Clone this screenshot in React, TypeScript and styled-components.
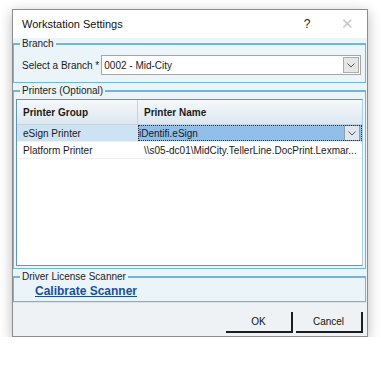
import { createGlobalStyle } from 'styled-components';
import styled from 'styled-components';

const GlobalStyle = createGlobalStyle`
  html, body {
    margin: 0;
    padding: 0;
    background: #ffffff;
  }
  body {
    font-family: 'Liberation Sans', Arial, sans-serif;
    font-size: 10px;
    color: #1a1a1a;
  }
`;

const Page = styled.div`
  padding: 9px 13px 0 12px;
`;

const Window = styled.div`
  width: 354px;
  height: 326px;
  border: 1px solid #8c8c8c;
  background: #ffffff;
  box-shadow: 0 3px 12px rgba(0, 0, 0, 0.28);
  display: flex;
  flex-direction: column;
`;

const TitleBar = styled.div`
  height: 28px;
  display: flex;
  align-items: center;
  padding-left: 9px;
  font-size: 11px;
  color: #111;
`;

const TitleText = styled.span`
  flex: 1;
`;

const TitleButton = styled.span<{ $muted?: boolean }>`
  width: 40px;
  text-align: center;
  font-size: ${({ $muted }) => ($muted ? '15px' : '12px')};
  color: ${({ $muted }) => ($muted ? '#c8c8c8' : '#222')};
`;

const Body = styled.div`
  flex: 1;
  display: flex;
  flex-direction: column;
  background: #ebf4f9;
  padding: 0 1px 0 0;
`;

const Group = styled.fieldset<{ $grow?: boolean }>`
  margin: 0;
  min-width: 0;
  border: 1px solid #6db6dd;
  border-top-width: 2px;
  padding: 0;
  flex: ${({ $grow }) => ($grow ? 1 : 'none')};
  display: flex;
  flex-direction: column;
  & + & {
    margin-top: 2px;
  }
`;

const Legend = styled.legend`
  margin-left: 6px;
  padding: 0 2px;
  font-size: 10px;
  line-height: 12px;
  color: #222;
`;

const BranchRow = styled.div`
  display: flex;
  align-items: center;
  gap: 2px;
  padding: 5px 4px 7px 8px;
`;

const Label = styled.span`
  white-space: nowrap;
`;

const Select = styled.div`
  flex: 1;
  height: 18px;
  border: 1px solid #a6a6a6;
  background: #ffffff;
  display: flex;
  align-items: center;
  padding-left: 2px;
`;

const SelectValue = styled.span`
  flex: 1;
`;

const DropButton = styled.span<{ $dark?: boolean }>`
  width: 14px;
  height: 14px;
  margin-right: 1px;
  border: 1px solid ${({ $dark }) => ($dark ? '#8e9fb0' : '#acacac')};
  background: ${({ $dark }) => ($dark ? '#dfe6ee' : '#e6e6e6')};
  display: flex;
  align-items: center;
  justify-content: center;
`;

const Grid = styled.div`
  flex: 1;
  margin: 2px 2px 2px 2px;
  background: #ffffff;
  border: 1px solid #5f97b5;
  border-right-color: #a9cfe4;
  display: flex;
  flex-direction: column;
`;

const Row = styled.div<{ $header?: boolean }>`
  display: grid;
  grid-template-columns: 121px 1fr;
  height: ${({ $header }) => ($header ? '24px' : '16px')};
  background: ${({ $header }) =>
    $header ? 'linear-gradient(#f5f8fb, #dde7f0)' : 'transparent'};
  border-bottom: 1px solid ${({ $header }) => ($header ? '#c5d3df' : '#f0f0f0')};
  font-weight: ${({ $header }) => ($header ? 700 : 400)};
`;

const Cell = styled.div<{ $tone?: 'row' | 'edit'; $header?: boolean }>`
  display: flex;
  align-items: center;
  padding-left: ${({ $tone }) => ($tone === 'edit' ? '1px' : '6px')};
  min-width: 0;
  white-space: nowrap;
  border-right: 1px solid ${({ $header }) => ($header ? '#c5d3df' : 'transparent')};
  background: ${({ $tone }) =>
    $tone === 'row' ? '#cde2f3' : $tone === 'edit' ? '#92bfe9' : 'transparent'};
  outline: ${({ $tone }) => ($tone === 'edit' ? '1px dotted #333' : 'none')};
  outline-offset: -1px;
`;

const CellText = styled.span`
  flex: 1;
`;

const LinkRow = styled.div`
  padding: 1px 0 2px 21px;
  line-height: 14px;
`;

const Link = styled.a`
  font-size: 12px;
  font-weight: 700;
  color: #1a4f9c;
  text-decoration: underline;
`;

const Footer = styled.div`
  height: 33px;
  background: #eff2f5;
  border-top: 1px solid #d8e3ea;
  display: flex;
  justify-content: flex-end;
  align-items: center;
  gap: 3px;
  padding-right: 4px;
`;

const Button = styled.button`
  width: 67px;
  height: 21px;
  margin-top: 5px;
  font-family: inherit;
  font-size: 10px;
  color: #111;
  background: #eff2f5;
  border: none;
  border-right: 2px solid #1d1d1d;
  border-bottom: 2px solid #1d1d1d;
  padding: 0;
`;

const Chevron = () => (
  <svg width="8" height="5" viewBox="0 0 8 5">
    <path d="M0.5 0.5 L4 4 L7.5 0.5" fill="none" stroke="#555" strokeWidth="1" />
  </svg>
);

export default function App() {
  return (
    <>
      <GlobalStyle />
      <Page>
        <Window>
          <TitleBar>
            <TitleText>Workstation Settings</TitleText>
            <TitleButton>?</TitleButton>
            <TitleButton $muted>✕</TitleButton>
          </TitleBar>
          <Body>
            <Group>
              <Legend>Branch</Legend>
              <BranchRow>
                <Label>Select a Branch *</Label>
                <Select>
                  <SelectValue>0002 - Mid-City</SelectValue>
                  <DropButton>
                    <Chevron />
                  </DropButton>
                </Select>
              </BranchRow>
            </Group>
            <Group $grow>
              <Legend>Printers (Optional)</Legend>
              <Grid>
                <Row $header>
                  <Cell $header>
                    <CellText>Printer Group</CellText>
                  </Cell>
                  <Cell>
                    <CellText>Printer Name</CellText>
                  </Cell>
                </Row>
                <Row>
                  <Cell $tone="row">
                    <CellText>eSign Printer</CellText>
                  </Cell>
                  <Cell $tone="edit">
                    <CellText>iDentifi.eSign</CellText>
                    <DropButton $dark>
                      <Chevron />
                    </DropButton>
                  </Cell>
                </Row>
                <Row>
                  <Cell>
                    <CellText>Platform Printer</CellText>
                  </Cell>
                  <Cell>
                    <CellText>\\s05-dc01\MidCity.TellerLine.DocPrint.Lexmar...</CellText>
                  </Cell>
                </Row>
              </Grid>
            </Group>
            <Group>
              <Legend>Driver License Scanner</Legend>
              <LinkRow>
                <Link href="#">Calibrate Scanner</Link>
              </LinkRow>
            </Group>
          </Body>
          <Footer>
            <Button>OK</Button>
            <Button>Cancel</Button>
          </Footer>
        </Window>
      </Page>
    </>
  );
}
